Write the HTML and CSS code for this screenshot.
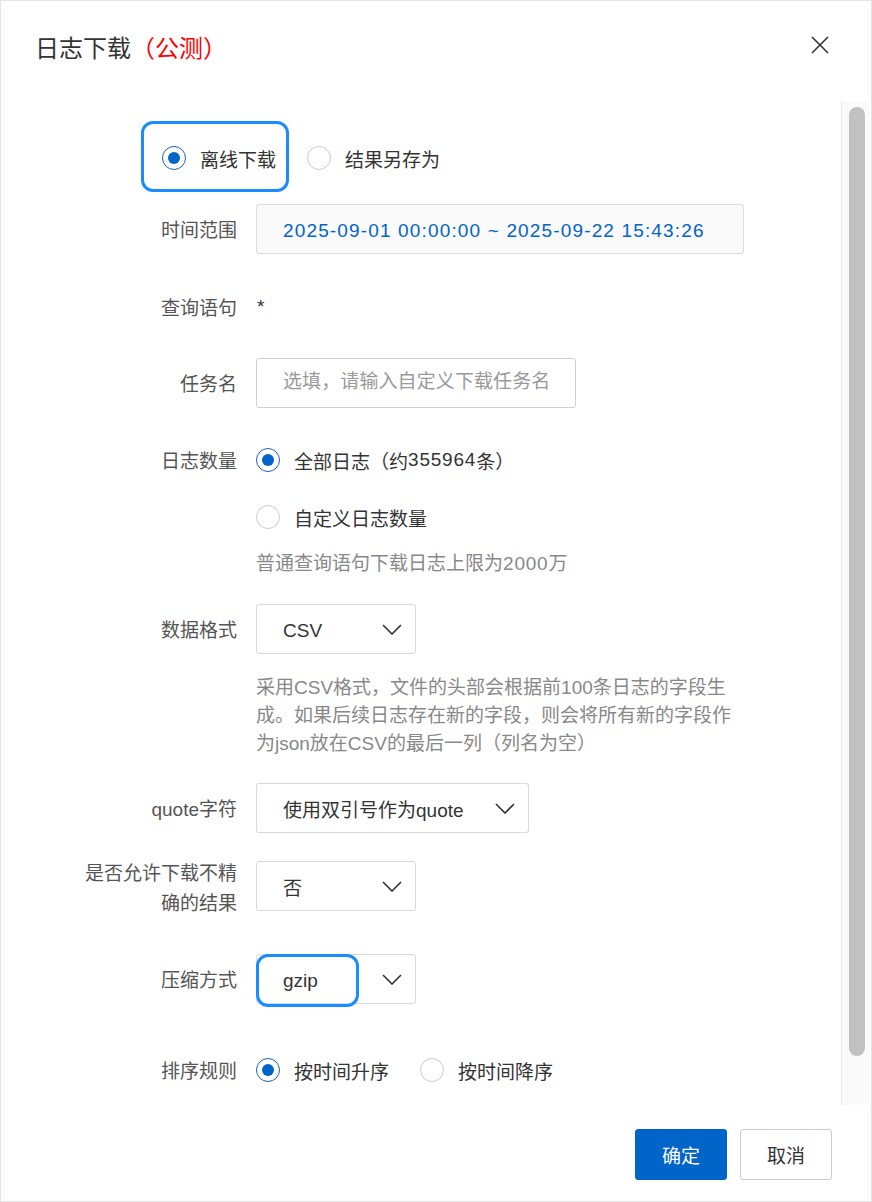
FILE: index.html
```html
<!DOCTYPE html>
<html lang="zh-CN">
<head>
  <meta charset="UTF-8">
  <title>日志下载</title>
  <link rel="stylesheet" href="styles.css">
</head>
<body>

<div class="dialog">
  <div class="dialog-header">
    <div class="dialog-title">日志下载<span class="beta">（公测）</span></div>
    <svg class="close" width="18" height="18" viewBox="0 0 18 18">
      <path d="M1 1 L17 17 M17 1 L1 17" stroke="#333" stroke-width="1.6" fill="none"/>
    </svg>
  </div>

  <div class="dialog-body">
    <div class="form">
      <!-- download mode -->
      <div class="mode-row">
        <div class="radio-group mode-group">
          <label class="radio checked"><span class="dot"></span>离线下载</label>
          <label class="radio"><span class="dot"></span>结果另存为</label>
          <div class="mark mark-mode"></div>
        </div>
      </div>

      <div class="item item-time">
        <div class="label">时间范围</div>
        <div class="control">
          <div class="input time-input">2025-09-01 00:00:00 ~ 2025-09-22 15:43:26</div>
        </div>
      </div>

      <div class="item item-query">
        <div class="label">查询语句</div>
        <div class="control"><span class="text">*</span></div>
      </div>

      <div class="item item-task">
        <div class="label">任务名</div>
        <div class="control">
          <div class="input task-input placeholder">选填，请输入自定义下载任务名</div>
        </div>
      </div>

      <div class="item item-count">
        <div class="label">日志数量</div>
        <div class="control column">
          <label class="radio checked"><span class="dot"></span>全部日志（约<span class="num">355964</span>条）</label>
          <label class="radio radio-second"><span class="dot"></span>自定义日志数量</label>
          <div class="help help-count">普通查询语句下载日志上限为<span class="num">2000</span>万</div>
        </div>
      </div>

      <div class="item item-format">
        <div class="label">数据格式</div>
        <div class="control column">
          <div class="select select-small">
            <span class="value latin">CSV</span>
            <svg class="arrow" width="20" height="11" viewBox="0 0 20 11"><path d="M1 1 L10 10 L19 1" stroke="#333" stroke-width="1.6" fill="none"/></svg>
          </div>
          <div class="help help-format">采用CSV格式，文件的头部会根据前100条日志的字段生成。如果后续日志存在新的字段，则会将所有新的字段作为json放在CSV的最后一列（列名为空）</div>
        </div>
      </div>

      <div class="item item-quote">
        <div class="label">quote字符</div>
        <div class="control">
          <div class="select select-wide">
            <span class="value">使用双引号作为quote</span>
            <svg class="arrow" width="20" height="11" viewBox="0 0 20 11"><path d="M1 1 L10 10 L19 1" stroke="#333" stroke-width="1.6" fill="none"/></svg>
          </div>
        </div>
      </div>

      <div class="item item-precise">
        <div class="label two-line">是否允许下载不精确的结果</div>
        <div class="control">
          <div class="select select-small">
            <span class="value">否</span>
            <svg class="arrow" width="20" height="11" viewBox="0 0 20 11"><path d="M1 1 L10 10 L19 1" stroke="#333" stroke-width="1.6" fill="none"/></svg>
          </div>
        </div>
      </div>

      <div class="item item-zip">
        <div class="label">压缩方式</div>
        <div class="control">
          <div class="select select-small">
            <span class="value latin">gzip</span>
            <svg class="arrow" width="20" height="11" viewBox="0 0 20 11"><path d="M1 1 L10 10 L19 1" stroke="#333" stroke-width="1.6" fill="none"/></svg>
            <div class="mark mark-zip"></div>
          </div>
        </div>
      </div>

      <div class="item item-sort">
        <div class="label">排序规则</div>
        <div class="control radio-group">
          <label class="radio checked"><span class="dot"></span>按时间升序</label>
          <label class="radio"><span class="dot"></span>按时间降序</label>
        </div>
      </div>
    </div>

    <div class="scrollbar">
      <div class="thumb"></div>
    </div>
  </div>

  <div class="dialog-footer">
    <button type="button" class="btn btn-primary">确定</button>
    <button type="button" class="btn">取消</button>
  </div>
</div>

</body>
</html>
```

FILE: styles.css
```css
* {
  box-sizing: border-box;
}

body {
  margin: 0;
  padding: 0;
  font-family: "Liberation Sans", "Noto Sans CJK SC", sans-serif;
  font-size: 19px;
  color: #333333;
  background-color: #ffffff;
  text-spacing-trim: space-all;
}

.dialog {
  width: 872px;
  height: 1202px;
  border: 1px solid #e3e3e3;
  display: flex;
  flex-direction: column;
}

.dialog-header {
  height: 100px;
  display: flex;
  justify-content: space-between;
  align-items: flex-start;
  padding: 32px 42px 0 34px;
}

.dialog-title {
  font-size: 24px;
  line-height: 32px;
  color: #333333;
}

.beta {
  color: #ff0000;
}

.close {
  margin-top: 3px;
}

.dialog-body {
  height: 1004px;
  display: flex;
  overflow: hidden;
}

.form {
  flex: 1;
  padding: 32px 0 0 80px;
}

/* fake scrollbar, always visible like the screenshot */
.scrollbar {
  width: 29px;
  margin-right: 1px;
  border-left: 1px solid #e8e8e8;
  background-color: #fafafa;
  padding: 6px 5px 49px 7px;
}

.thumb {
  height: 100%;
  background-color: #c1c1c1;
  border-radius: 8px;
}

.mode-row {
  padding-left: 81px;
  height: 50px;
  margin-bottom: 21px;
}

.item {
  display: flex;
  align-items: flex-start;
}

.label {
  width: 156px;
  margin-right: 19px;
  text-align: right;
  padding-top: 4px;
  line-height: 46px;
  color: #555555;
  flex-shrink: 0;
}

.label.two-line {
  padding-top: 0;
  line-height: 30px;
  margin-top: -2px;
}

.control {
  display: flex;
  align-items: center;
  min-height: 50px;
}

.control.column {
  flex-direction: column;
  align-items: flex-start;
}

.text {
  padding-left: 1px;
}

.num {
  letter-spacing: 0.8px;
}

.item-time { margin-bottom: 28px; }
.item-query { margin-bottom: 26px; }
.item-task { margin-bottom: 27px; }
.item-count { margin-bottom: 26px; }
.item-format { margin-bottom: 25px; }
.item-quote { margin-bottom: 28px; }
.item-precise { margin-bottom: 35px; }
.item-zip { margin-bottom: 41px; }

.input {
  height: 50px;
  border: 1px solid #dcdcdc;
  border-radius: 3px;
  padding: 4px 26px 0;
  line-height: 44px;
  white-space: nowrap;
}

.time-input {
  width: 488px;
  background-color: #fafafa;
  color: #0064c8;
  letter-spacing: 1.15px;
}

.task-input {
  width: 320px;
  border-color: #cfcfcf;
  padding-top: 1px;
  letter-spacing: 0.1px;
}

.placeholder {
  color: #999999;
}

.radio-group {
  display: flex;
  align-items: center;
  gap: 31px;
  position: relative;
  height: 50px;
}

.radio {
  display: flex;
  align-items: center;
  height: 50px;
  color: #333333;
}

.dot {
  width: 24px;
  height: 24px;
  border-radius: 50%;
  border: 1px solid #cccccc;
  background-color: #ffffff;
  margin-right: 14px;
  display: flex;
  align-items: center;
  justify-content: center;
}

.radio.checked .dot {
  border: 1.5px solid #1f5fae;
}

.radio.checked .dot::after {
  content: "";
  width: 12px;
  height: 12px;
  border-radius: 50%;
  background-color: #0064c8;
}

.radio-second {
  margin-top: 7px;
}

.help {
  color: #888888;
  line-height: 28px;
}

.help-count {
  margin-top: 8px;
}

.help-format {
  width: 488px;
  margin-top: 20px;
}

.select {
  height: 50px;
  border: 1px solid #d9d9d9;
  border-radius: 3px;
  display: flex;
  align-items: center;
  justify-content: space-between;
  padding: 0 13px 0 26px;
  position: relative;
}

.value.latin {
  padding-top: 3px;
}

.select-small {
  width: 160px;
}

.select-wide {
  width: 273px;
}

.arrow {
  flex-shrink: 0;
}

/* blue annotation boxes */
.mark {
  position: absolute;
  border: 3px solid #1a8cff;
  border-radius: 12px;
}

.mark-mode {
  left: -21px;
  top: -12px;
  width: 148px;
  height: 71px;
}

.mark-zip {
  left: -1px;
  top: -1px;
  width: 103px;
  height: 53px;
}

.dialog-footer {
  flex: 1;
  display: flex;
  justify-content: flex-end;
  align-items: flex-start;
  gap: 13px;
  padding: 24px 39px 0 0;
}

.btn {
  width: 92px;
  height: 51px;
  border: 1px solid #cccccc;
  border-radius: 3px;
  background-color: #ffffff;
  color: #333333;
  font-family: "Liberation Sans", "Noto Sans CJK SC", sans-serif;
  font-size: 19px;
  cursor: pointer;
}

.btn-primary {
  background-color: #0064c8;
  border-color: #0064c8;
  color: #ffffff;
}
```
